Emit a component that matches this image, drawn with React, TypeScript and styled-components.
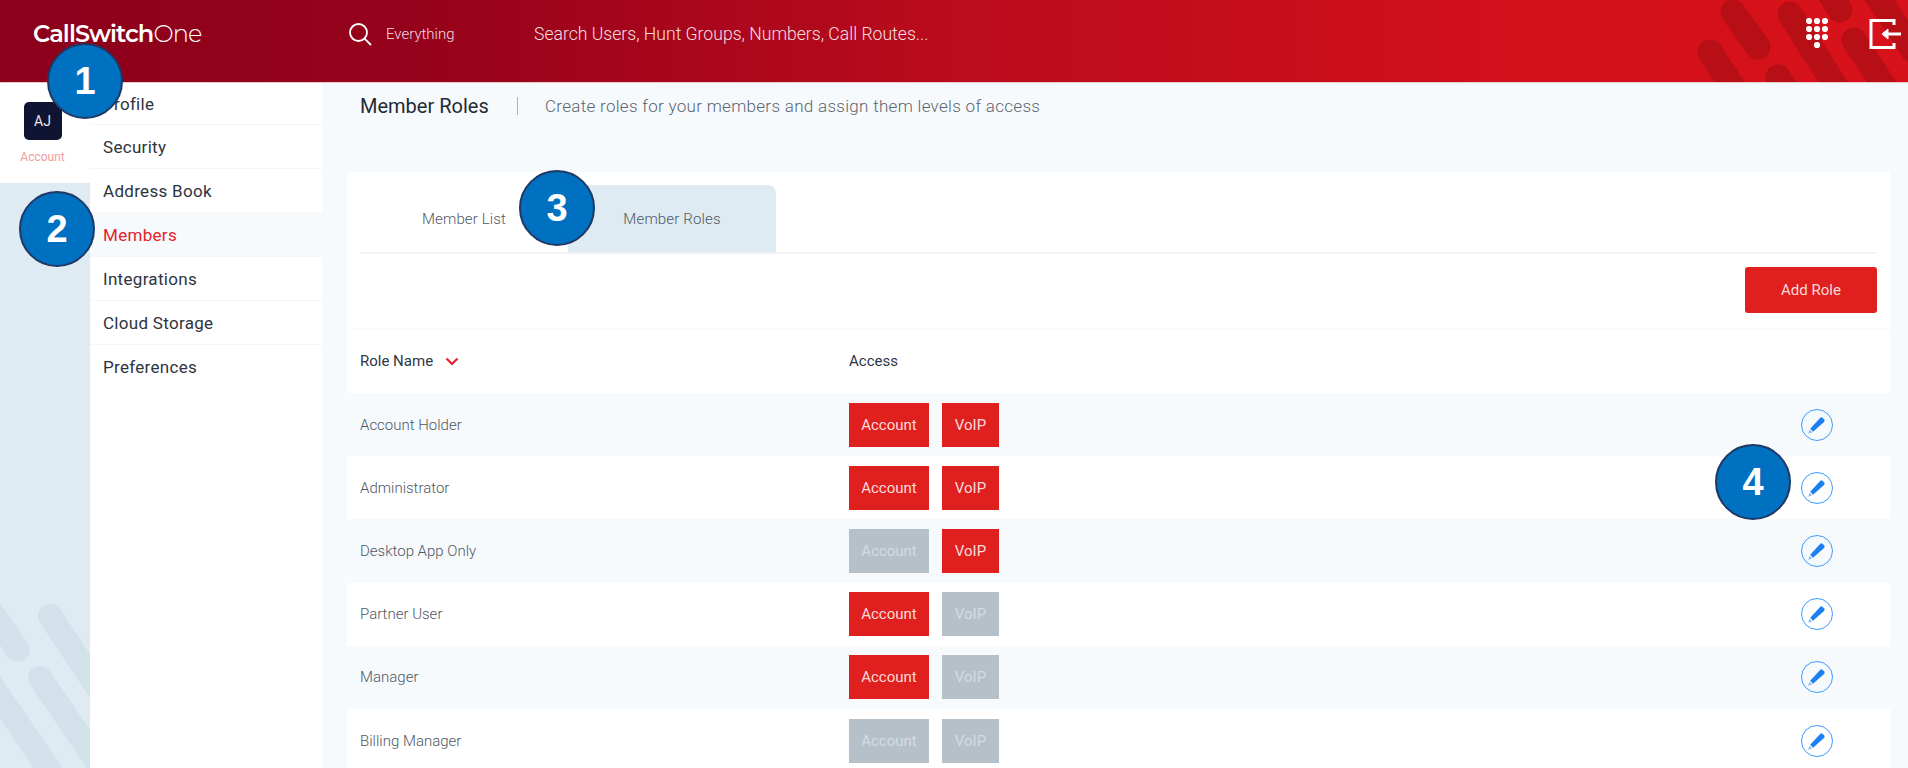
import React from "react";
import styled, { createGlobalStyle } from "styled-components";

const Global = createGlobalStyle`
  html, body { margin: 0; padding: 0; background: #f6fafd; }
  * { box-sizing: border-box; }
  body { font-family: Roboto, "Liberation Sans", sans-serif; }
`;

const Page = styled.div`
  position: relative;
  width: 1908px;
  height: 768px;
  overflow: hidden;
  display: flex;
  flex-direction: column;
`;

const Header = styled.header`
  position: relative;
  flex: 0 0 83px;
  display: flex;
  align-items: center;
  padding-bottom: 15px;
  background: linear-gradient(90deg, #8c001b 0%, #96021b 22%, #bb0b1d 50%, #d0101a 78%, #d8121a 100%);
  border-bottom: 1px solid #e9c9c9;
  color: #fff;
`;

const Stripes = styled.svg`
  position: absolute;
  top: 0;
  right: 0;
`;

const Logo = styled.div`
  width: 348px;
  padding-left: 33px;
  font-family: Montserrat, Inter, sans-serif;
  font-size: 24px;
  font-weight: 600;
  letter-spacing: -0.9px;
`;

const LogoLight = styled.span`
  font-weight: 300;
`;

const ScopeLabel = styled.span`
  width: 148px;
  margin-left: 14px;
  font-size: 15px;
  font-weight: 300;
  color: #f3dfe2;
`;

const SearchText = styled.span`
  font-size: 17.6px;
  font-weight: 300;
  color: #f6dfe0;
`;

const HeaderActions = styled.div`
  position: relative;
  margin-left: auto;
  display: flex;
  align-items: center;
  gap: 41px;
  padding-right: 7px;
`;

const Body = styled.div`
  flex: 1;
  display: flex;
  min-height: 0;
`;

const Rail = styled.nav`
  position: relative;
  flex: 0 0 90px;
  background: #deebf3;
  overflow: hidden;
`;

const RailStripes = styled.svg`
  position: absolute;
  left: 0;
  bottom: 0;
`;

const RailActive = styled.div`
  height: 100px;
  padding: 19px 5px 0 0;
  display: flex;
  flex-direction: column;
  align-items: center;
  gap: 10px;
  background: #fff;
`;

const Avatar = styled.div`
  width: 38px;
  height: 38px;
  display: flex;
  align-items: center;
  justify-content: center;
  border-radius: 5px;
  background: #0f1433;
  color: #e8e8ee;
  font-size: 14px;
`;

const RailLabel = styled.span`
  font-size: 12px;
  color: #f09c9c;
`;

const SideMenu = styled.ul`
  flex: 0 0 232px;
  margin: 0;
  padding: 0;
  list-style: none;
  background: #fff;
`;

const MenuItem = styled.li<{ $active?: boolean }>`
  height: 44px;
  display: flex;
  align-items: center;
  padding-left: 13px;
  font-size: 17px;
  letter-spacing: 0.3px;
  color: ${(p) => (p.$active ? "#e5222b" : "#2e3440")};
  background: ${(p) => (p.$active ? "#f6fafd" : "#fff")};
  border-bottom: 1px solid #f4f6f8;
  &:first-child {
    height: 42px;
  }
  &:last-child {
    border-bottom: 0;
  }
`;

const Main = styled.main`
  flex: 1;
  padding: 0 18px 0 25px;
  background: #f6fafd;
  min-width: 0;
`;

const TitleRow = styled.div`
  height: 89px;
  padding: 11px 0 0 13px;
  display: flex;
  align-items: flex-start;
`;

const Title = styled.h1`
  margin: 0;
  width: 157px;
  font-size: 20px;
  line-height: 24px;
  font-weight: 400;
  color: #252a33;
`;

const TitleDivider = styled.span`
  width: 1px;
  height: 18px;
  margin: 3px 27px 0 0;
  background: #8fb4ee;
`;

const TitleDesc = styled.p`
  margin: 0;
  font-size: 17px;
  line-height: 24px;
  font-weight: 300;
  letter-spacing: 0.3px;
  color: #5d6570;
`;

const Card = styled.section`
  background: #fff;
`;

const Tabs = styled.div`
  margin: 0 13px;
  padding-top: 13px;
  display: flex;
  border-bottom: 2px solid #eff4f8;
`;

const Tab = styled.div<{ $active?: boolean }>`
  width: 208px;
  height: 67px;
  display: flex;
  align-items: center;
  justify-content: center;
  padding-top: 1px;
  font-size: 15px;
  font-weight: 300;
  letter-spacing: 0.15px;
  color: #4f5966;
  border-radius: 8px 8px 0 0;
  background: ${(p) => (p.$active ? "#deebf3" : "transparent")};
`;

const Toolbar = styled.div`
  height: 75px;
  padding: 13px 13px 0 0;
  display: flex;
  justify-content: flex-end;
  border-bottom: 1px solid #f8fafc;
`;

const AddButton = styled.button`
  width: 132px;
  height: 46px;
  border: 0;
  border-radius: 3px;
  background: #e01f1f;
  color: #fad9d9;
  font-family: inherit;
  font-size: 15px;
`;

const Grid = "489px 1fr 89px";

const HeadRow = styled.div`
  height: 64px;
  padding-left: 13px;
  display: grid;
  grid-template-columns: ${Grid};
  align-items: center;
  font-size: 15px;
  color: #2f3645;
`;

const HeadCell = styled.span`
  display: flex;
  align-items: center;
  gap: 12px;
`;

const Row = styled.div<{ $alt: boolean }>`
  height: 63.2px;
  padding-left: 13px;
  display: grid;
  grid-template-columns: ${Grid};
  align-items: center;
  font-size: 15px;
  font-weight: 300;
  color: #4f5763;
  background: ${(p) => (p.$alt ? "#f6fafd" : "#fff")};
`;

const Chips = styled.div`
  display: flex;
  gap: 13px;
`;

const Chip = styled.span<{ $on: boolean; $w: number }>`
  width: ${(p) => p.$w}px;
  height: 44px;
  display: flex;
  align-items: center;
  justify-content: center;
  font-size: 15px;
  font-weight: 400;
  color: ${(p) => (p.$on ? "#fbdcdc" : "#d5dbe0")};
  background: ${(p) => (p.$on ? "#e01f1f" : "#b6c0c8")};
`;

const EditButton = styled.span`
  width: 32px;
  height: 32px;
  display: flex;
  align-items: center;
  justify-content: center;
  border: 1.5px solid #3f9bff;
  border-radius: 50%;
`;

const Callout = styled.div<{ $x: number; $y: number }>`
  position: absolute;
  left: ${(p) => p.$x - 38}px;
  top: ${(p) => p.$y - 38}px;
  width: 76px;
  height: 76px;
  display: flex;
  align-items: center;
  justify-content: center;
  border-radius: 50%;
  border: 2px solid #1f3864;
  background: #0070c0;
  color: #fff;
  font-family: "Liberation Sans", Arial, sans-serif;
  font-size: 38px;
  font-weight: 700;
`;

const menu = ["Profile", "Security", "Address Book", "Members", "Integrations", "Cloud Storage", "Preferences"];

const roles: { name: string; account: boolean; voip: boolean }[] = [
  { name: "Account Holder", account: true, voip: true },
  { name: "Administrator", account: true, voip: true },
  { name: "Desktop App Only", account: false, voip: true },
  { name: "Partner User", account: true, voip: false },
  { name: "Manager", account: true, voip: false },
  { name: "Billing Manager", account: false, voip: false },
];

const callouts = [
  { n: 1, x: 85, y: 81 },
  { n: 2, x: 57, y: 229 },
  { n: 3, x: 557, y: 208 },
  { n: 4, x: 1753, y: 482 },
];

const SearchIcon = () => (
  <svg width="24" height="24" viewBox="0 0 24 24" fill="none" stroke="#fff" strokeWidth="1.8" strokeLinecap="round">
    <circle cx="10.5" cy="10.5" r="8.5" />
    <path d="M16.8 16.8 L22.5 22.5" />
  </svg>
);

const DialPad = () => (
  <svg width="22" height="32" viewBox="0 0 22 32" fill="#fff">
    {[3, 11, 19].map((cy) =>
      [3, 11, 19].map((cx) => <circle key={`${cx}-${cy}`} cx={cx} cy={cy} r="3.1" />)
    )}
    <circle cx="11" cy="27" r="3.1" />
  </svg>
);

const ExitIcon = () => (
  <svg width="32" height="30" viewBox="0 0 32 30" fill="none" stroke="#fff" strokeWidth="3">
    <path d="M25 6 V1.5 H2 V28.5 H25 V24" />
    <path d="M32 15 H16" />
    <path d="M19 10 L13 15 L19 20 Z" fill="#fff" strokeWidth="1" />
  </svg>
);

const Chevron = () => (
  <svg width="14" height="9" viewBox="0 0 14 9" fill="none" stroke="#e5222b" strokeWidth="2.2">
    <path d="M1.5 1.5 L7 7 L12.5 1.5" />
  </svg>
);

const Pencil = () => (
  <svg width="22" height="22" viewBox="0 0 20 20">
    <path d="M6.4 16.2 L3.8 13.4 L12.8 3.6 Q13.8 2.6 15 3.4 L16.6 5 Q17.4 6.2 16.4 7.2 Z" fill="#1e7ff0" />
    <path d="M3.2 14.2 L5.6 16.8 L2 18 Z" fill="#8dbcf2" />
  </svg>
);

export default function App() {
  return (
    <Page>
      <Global />
      <Header>
        <Stripes width="220" height="82" viewBox="0 0 220 82" fill="none" stroke="#b70f15" strokeWidth="25" strokeLinecap="round">
          <path d="M45 12 L70 47" />
          <path d="M22 52 L60 110" />
          <path d="M102 14 L150 90" />
          <path d="M90 77 L115 115" />
          <path d="M130 -25 L152 10" />
          <path d="M166 40 L200 92" />
          <path d="M185 -10 L225 50" />
        </Stripes>
        <Logo>
          CallSwitch<LogoLight>One</LogoLight>
        </Logo>
        <SearchIcon />
        <ScopeLabel>Everything</ScopeLabel>
        <SearchText>Search Users, Hunt Groups, Numbers, Call Routes...</SearchText>
        <HeaderActions>
          <DialPad />
          <ExitIcon />
        </HeaderActions>
      </Header>
      <Body>
        <Rail>
          <RailActive>
            <Avatar>AJ</Avatar>
            <RailLabel>Account</RailLabel>
          </RailActive>
          <RailStripes width="90" height="180" viewBox="0 0 90 180" fill="none" stroke="#d3e1ea" strokeWidth="24" strokeLinecap="round">
            <path d="M-10 22 L18 62" />
            <path d="M50 28 L110 118" />
            <path d="M40 90 L100 178" />
            <path d="M-12 92 L55 190" />
          </RailStripes>
        </Rail>
        <SideMenu>
          {menu.map((m) => (
            <MenuItem key={m} $active={m === "Members"}>
              {m}
            </MenuItem>
          ))}
        </SideMenu>
        <Main>
          <TitleRow>
            <Title>Member Roles</Title>
            <TitleDivider />
            <TitleDesc>Create roles for your members and assign them levels of access</TitleDesc>
          </TitleRow>
          <Card>
            <Tabs>
              <Tab>Member List</Tab>
              <Tab $active>Member Roles</Tab>
            </Tabs>
            <Toolbar>
              <AddButton>Add Role</AddButton>
            </Toolbar>
            <HeadRow>
              <HeadCell>
                Role Name <Chevron />
              </HeadCell>
              <HeadCell>Access</HeadCell>
            </HeadRow>
            {roles.map((r, i) => (
              <Row key={r.name} $alt={i % 2 === 0}>
                <span>{r.name}</span>
                <Chips>
                  <Chip $on={r.account} $w={80}>Account</Chip>
                  <Chip $on={r.voip} $w={57}>VoIP</Chip>
                </Chips>
                <EditButton>
                  <Pencil />
                </EditButton>
              </Row>
            ))}
          </Card>
        </Main>
      </Body>
      {callouts.map((c) => (
        <Callout key={c.n} $x={c.x} $y={c.y}>
          {c.n}
        </Callout>
      ))}
    </Page>
  );
}
